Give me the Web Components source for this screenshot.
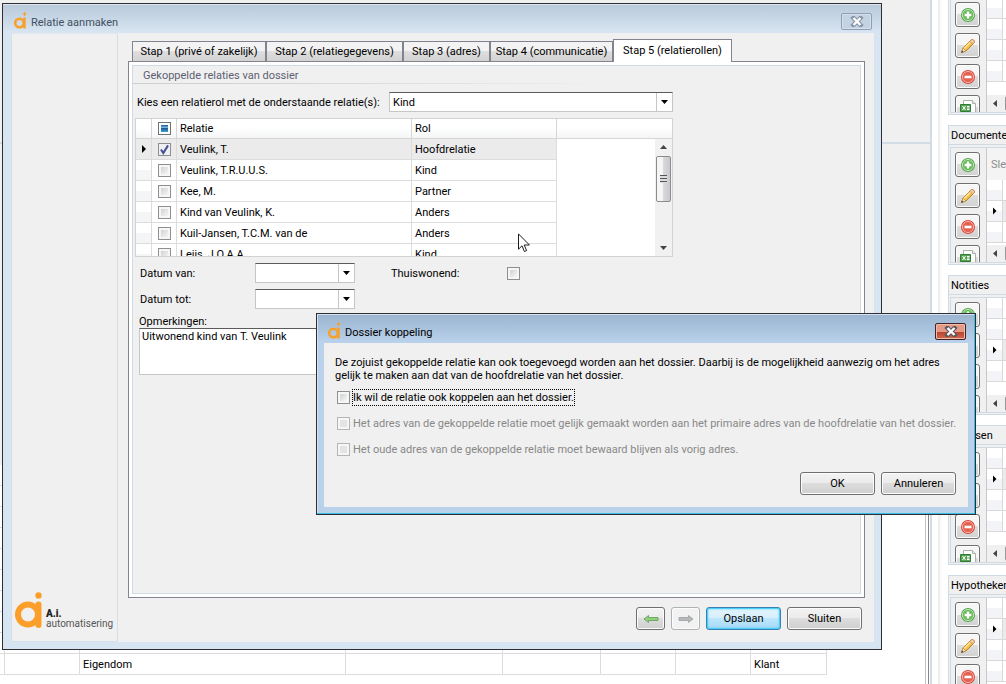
<!DOCTYPE html>
<html lang="nl">
<head>
<meta charset="utf-8">
<title>Relatie aanmaken</title>
<style>
html, body { height: 100%; margin: 0; overflow: hidden; }
body { background: #fff; color: #000; font: 11px/13px Roboto, "Open Sans", sans-serif; }
</style>
</head>
<body>
<app-desktop>
  <case-background slot="main"></case-background>
  <side-panel slot="side" rows="4" marker="0"></side-panel>
  <side-panel slot="side" rows="3" marker="2" hint="Sleep een kolom">Documenten</side-panel>
  <side-panel slot="side" rows="4" marker="3">Notities</side-panel>
  <side-panel slot="side" rows="4" marker="2">Polissen</side-panel>
  <side-panel slot="side" rows="4" marker="2">Hypotheken</side-panel>

  <win-frame slot="wizard" heading="Relatie aanmaken">
    <wizard-body>
      <tab-item slot="tabs" style="--tab-width:134px">Stap 1 (privé of zakelijk)</tab-item>
      <tab-item slot="tabs" style="--tab-width:137px">Stap 2 (relatiegegevens)</tab-item>
      <tab-item slot="tabs" style="--tab-width:87px">Stap 3 (adres)</tab-item>
      <tab-item slot="tabs" style="--tab-width:123px">Stap 4 (communicatie)</tab-item>
      <tab-item slot="tabs" selected style="--tab-width:119px">Stap 5 (relatierollen)</tab-item>
      <role-form></role-form>
      <push-button slot="actions" icon="back" label="Vorige"></push-button>
      <push-button slot="actions" icon="next" label="Volgende" disabled></push-button>
      <push-button slot="actions" primary>Opslaan</push-button>
      <push-button slot="actions">Sluiten</push-button>
    </wizard-body>
  </win-frame>

  <win-frame slot="dialog" heading="Dossier koppeling" active>
    <link-dialog>
      <span slot="message">De zojuist gekoppelde relatie kan ook toegevoegd worden aan het dossier. Daarbij is de mogelijkheid aanwezig om het adres gelijk te maken aan dat van de hoofdrelatie van het dossier.</span>
      <check-field focused>Ik wil de relatie ook koppelen aan het dossier.</check-field>
      <check-field disabled>Het adres van de gekoppelde relatie moet gelijk gemaakt worden aan het primaire adres van de hoofdrelatie van het dossier.</check-field>
      <check-field disabled>Het oude adres van de gekoppelde relatie moet bewaard blijven als vorig adres.</check-field>
      <push-button slot="actions">OK</push-button>
      <push-button slot="actions">Annuleren</push-button>
    </link-dialog>
  </win-frame>

  <mouse-pointer slot="pointer"></mouse-pointer>
</app-desktop>

<script>
const BASE = `:host, *, *::before, *::after { box-sizing: border-box; }
button, input, select, textarea { font: inherit; color: inherit; margin: 0; }`;

const CHECK = `input[type=checkbox] { appearance: none; flex: none; width: 13px; height: 13px; margin: 0; border: 1px solid #8e8f8f;
  background: linear-gradient(135deg, #cfd2d6, #f6f6f6) content-box, #f6f6f6; padding: 2px; display: block; }
input[type=checkbox]:disabled { border-color: #b5b5b5; background: linear-gradient(#e4e4e4, #e4e4e4) content-box, #f6f6f6; }
input[type=checkbox]:checked { background: url("data:image/svg+xml,%3Csvg xmlns='http://www.w3.org/2000/svg' viewBox='0 0 11 11'%3E%3Cpath d='M2.5 5.5 4.5 8.5 8.5 2' fill='none' stroke='%23484f97' stroke-width='1.7'/%3E%3C/svg%3E") border-box, #eef0f4; }
input[type=checkbox].some { border-color: #6f7378; background: linear-gradient(#2b6ca8 0 10%, #7db9e4 35%, #1d5f9c 50%, #3fa0d8) content-box, #fff; }`;

function define(name, markup, setup) {
  customElements.define(name, class extends HTMLElement {
    connectedCallback() {
      if (this.shadowRoot) return;
      const root = this.attachShadow({ mode: 'open' });
      root.innerHTML = typeof markup === 'function' ? markup(this) : markup;
      if (setup) setup(this, root);
    }
  });
}

/* Desktop: the case screen, with the windows lying over it */
define('app-desktop', `<style>${BASE}
:host { display: flex; height: 100%; position: relative; overflow: hidden; }
.main { flex: 1; min-width: 0; display: flex; }
.side { flex: none; width: 74px; padding-left: 16px; overflow: hidden; background: linear-gradient(90deg, #fff 6px, #e9ebed 6px, #fff 10px); }
.stack { display: flex; flex-direction: column; gap: 10px; margin-top: -25px; }
.wizard { position: absolute; left: 2px; top: 3px; right: 124px; bottom: 34px; display: flex; }
.dialog { position: absolute; left: 316px; top: 313px; right: 30px; display: flex; }
.pointer { position: absolute; left: 518px; top: 233px; }
</style>
<div class="main"><slot name="main"></slot></div>
<aside class="side"><div class="stack"><slot name="side"></slot></div></aside>
<div class="wizard"><slot name="wizard"></slot></div>
<div class="pointer"><slot name="pointer"></slot></div>
<div class="dialog"><slot name="dialog"></slot></div>`);

define('case-background', `<style>${BASE}
:host { flex: 1; display: flex; flex-direction: column; min-width: 0; border-right: 2px solid #d2dce6; }
.top { flex: 1; background: #f0f0f0; display: flex; flex-direction: column; }
.top i { flex: none; height: 144px; border-bottom: 2px solid #d2dce6; }
.bottom { flex: none; padding-bottom: 9px; margin-right: 1px; border-right: 1px solid #85858d; background: linear-gradient(#c4c4c8, #c4c4c8) right 2px top / 1px 100% no-repeat #fff; }
table { border-collapse: separate; border-spacing: 0; table-layout: fixed; width: 827px; }
td { height: 21px; padding: 0 3px; border-right: 1px solid #dcdcdc; border-bottom: 1px solid #dcdcdc; white-space: nowrap; }
</style>
<div class="top"><i></i></div>
<div class="bottom"><table aria-label="Dossiers">
<colgroup><col style="width:5px"><col style="width:75px"><col style="width:266px"><col style="width:157px"><col style="width:98px"><col style="width:75px"><col style="width:75px"><col style="width:76px"></colgroup>
<tbody></tbody></table></div>`, (el, root) => {
  const empty = '<tr>' + '<td></td>'.repeat(8) + '</tr>';
  root.querySelector('tbody').innerHTML = empty.repeat(9) +
    '<tr><td></td><td></td><td>Eigendom</td><td></td><td></td><td></td><td></td><td>Klant</td></tr>';
});

/* Icons of the tool buttons */
const ICONS = {
  add: `<circle cx="8" cy="8" r="7" fill="#54a64c"/><circle cx="8" cy="8" r="5.6" fill="#68b95b" stroke="#c9eabf" stroke-width=".9"/><path d="M8 4.6v6.8M4.6 8h6.8" stroke="#fff" stroke-width="2.4"/>`,
  edit: `<path d="M1.5 14.5 3 10 11.2 1.8c1.300-1.300 4.300 1.400 3 3L6 13z" fill="#f6bd3c" stroke="#b87a1e" stroke-width=".9"/><path d="M4 10.600 11 3.600" stroke="#ffe79b" stroke-width="1.500"/><path d="M11.200 1.800c1.300-1.300 4.300 1.400 3 3l-1.500 1.500-3-3z" fill="#f0c9a0" stroke="#b98a5c" stroke-width=".7"/><path d="M1.500 14.500 3 10l3 3z" fill="#f3dfb6" stroke="#b08040" stroke-width=".6"/><path d="M1.200 14.800 2 12.500 3.600 14z" fill="#444"/>`,
  remove: `<circle cx="8" cy="8" r="7" fill="#d8463c"/><circle cx="8" cy="8" r="5.600" fill="#e6604f" stroke="#f7bcb3" stroke-width=".9"/><path d="M4.500 8h7" stroke="#fff" stroke-width="2.600"/>`,
  sheet: `<path d="M3.500.5h9l3 3v12h-12z" fill="#fff" stroke="#a9b2a9"/><path d="M12.500.5v3h3" fill="#e9eee9" stroke="#a9b2a9"/><path d="M.5 4.500h10v7H.5z" fill="#58a255" stroke="#2f7d33"/><path d="m2.500 6 3 4m0-4-3 4M7 6.500h2.500M7 8h2.500M7 9.500h2.500" stroke="#fff" stroke-width="1"/>`,
  back: `<path d="M1 8 5.500 4.500V6.500H15v3H5.500v2z" fill="#8ed07c" stroke="#5f9a57" stroke-width=".8"/>`,
  next: `<path d="M15 8 10.500 4.500V6.500H1v3h9.500v2z" fill="#b4b8ba" stroke="#9a9ea0" stroke-width=".8"/>`
};
const icon = n => `<svg width="16" height="16" viewBox="0 0 16 16" aria-hidden="true">${ICONS[n]}</svg>`;

/* Docked panel with tool buttons and a small grid */
define('side-panel', el => `<style>${BASE}
:host { display: flex; flex-direction: column; gap: 2px; flex: none; height: 140px; width: 240px; background: #f0f0f0; border: 1px solid #cfdae4; }
h2 { flex: none; margin: 0; height: 19px; padding: 3px 2px; font: inherit; border-bottom: 1px solid #cfdae4; }
.body { flex: 1; min-height: 0; margin: 0 1px 1px; border: 1px solid #cfdae4; display: flex; overflow: hidden; }
.tools { flex: none; width: 35px; padding: 4px; display: flex; flex-direction: column; gap: 6px; }
button { flex: none; width: 25px; height: 25px; padding: 0; display: grid; place-items: center; border: 1px solid #707070; border-radius: 3px; background: linear-gradient(#f6f6f6 50%, #dedede 50%, #d2d2d2); box-shadow: inset 0 0 0 1px #fcfcfc; }
.grid { flex: 1; display: flex; flex-direction: column; overflow: hidden; border-left: 1px solid #c8c8c8; background: #fff; }
.hint { flex: none; height: 32px; padding: 10px 4px; background: #f4f4f4; color: #8c8c8c; }
.row { flex: none; height: 21px; display: flex; border-bottom: 1px solid #d9d9d9; }
.row i { width: 16px; border-right: 1px solid #d9d9d9; background: linear-gradient(#fff 50%, #f3f4f7 50%); display: grid; place-items: center; }
.row.on { background: #ebebeb; }
.mark { width: 4px; height: 8px; background: #000; clip-path: polygon(0 0, 100% 50%, 0 100%); }
.scroll { margin-top: auto; flex: none; height: 17px; background: #f0f0f0; display: flex; align-items: center; gap: 8px; padding-left: 6px; }
.scroll b { width: 4px; height: 7px; background: #444; clip-path: polygon(100% 0, 0 50%, 100% 100%); }
.scroll u { flex: 1; height: 15px; border: 1px solid #979797; border-radius: 2px; background: linear-gradient(#f4f4f4, #d5d5d5); }
</style>
<h2><slot></slot></h2>
<div class="body">
<div class="tools"><button aria-label="Toevoegen">${icon('add')}</button><button aria-label="Wijzigen">${icon('edit')}</button><button aria-label="Verwijderen">${icon('remove')}</button><button aria-label="Exporteren">${icon('sheet')}</button></div>
<div class="grid">${el.hasAttribute('hint') ? `<div class="hint">${el.getAttribute('hint')}</div>` : ''}${
  Array.from({ length: +el.getAttribute('rows') }, (_, i) => i + 1 === +el.getAttribute('marker')
    ? '<div class="row on"><i><span class="mark"></span></i></div>' : '<div class="row"><i></i></div>').join('')
}<div class="scroll"><b></b><u></u></div></div>
</div>`);

/* Window frame with title bar */
define('win-frame', el => `<style>${BASE}
:host { flex: 1; min-width: 0; display: flex; flex-direction: column; border: 1px solid #2e2e34; padding: 0 7px 7px; 
  background: linear-gradient(#b8c9d9, #d7e4f1 28px); box-shadow: inset 0 1px #dfe8f1; }
:host(:not([active])) { padding-left: 8px; }
:host([active]) { background: linear-gradient(#9ab4cf, #b9d1ea 28px); box-shadow: inset -1px -1px #35bfe0, inset 1px 1px #d5e4f3; }
header { flex: none; height: 29px; display: flex; align-items: center; gap: 3px; padding-left: 2px; color: #42505f; }
:host([active]) header { color: #000; padding-left: 3px; }
h1 { flex: 1; margin: 0; padding-top: 7px; font: inherit; }
header svg.logo { flex: none; margin-top: 4px; }
.close { flex: none; width: 31px; height: 17px; padding: 0; margin-top: 6px; margin-right: 2px; display: grid; place-items: center; border: 1px solid #8f9fb1; border-radius: 2px; background: #c4d3e1; box-shadow: inset 0 0 0 1px #d5e0ea; }
:host([active]) .close { border-color: #45222a; background: linear-gradient(#e39a87 50%, #b8402c 50%, #d06a50); box-shadow: inset 0 0 0 1px #f0bda4; }
main { flex: 1; min-height: 0; display: flex; background: #f0f0f0; }
</style>
<header><svg class="logo" width="15" height="17" viewBox="0 0 15 17" aria-hidden="true"><circle cx="6.500" cy="11" r="4.300" fill="none" stroke="#f9a02b" stroke-width="2.600"/><path d="M11.500 5.500v11" stroke="#f9a02b" stroke-width="2.400"/><path d="M11.500 0v4M9.500 2h4" stroke="#f9a02b" stroke-width="1.200"/></svg>
<h1>${el.getAttribute('heading')}</h1>
<button class="close" aria-label="Venster sluiten"><svg width="14" height="11" viewBox="0 0 14 11"><path d="m3.500 2 7 7m0-7-7 7" stroke="${el.hasAttribute('active') ? '#55585e' : '#8493a3'}" stroke-width="4.400" stroke-linecap="square"/><path d="m3.500 2 7 7m0-7-7 7" stroke="#fff" stroke-width="2.400"/></svg></button></header>
<main><slot></slot></main>`);

define('tab-item', `<style>${BASE}
:host { flex: none; width: var(--tab-width); height: 20px; display: block; }
button { width: 100%; height: 100%; padding: 0; white-space: nowrap; border: 1px solid #83838f; border-bottom: 0; background: linear-gradient(#f3f3f3 45%, #dedede 50%, #d2d2d2); }
:host([selected]) { height: 23px; position: relative; margin-bottom: -1px; }
:host([selected]) button { background: #fff; padding-bottom: 1px; }
</style><button role="tab"><slot></slot></button>`);

define('push-button', el => `<style>${BASE}
:host { flex: none; display: block; width: ${el.hasAttribute('icon') ? 29 : 75}px; }
button { width: 100%; height: 23px; padding: 0; display: grid; place-items: center; border: 1px solid #707070; border-radius: 3px; background: linear-gradient(#f3f3f3, #ebebeb 48%, #dddddd 50%, #cfcfcf); box-shadow: inset 0 0 0 1px #fcfcfc; }
:host([disabled]) button { border-color: #adb2b5; background: #f2f2f2; }
:host([primary]) button { border-color: #3c7fb1; background: linear-gradient(#e3f4fc, #d6effc 48%, #bee6fd 50%, #a7d9f5); box-shadow: inset 0 0 0 1px #48d0fb, inset 0 0 2px 1px #48d0fb; }
</style><button type="button"${el.hasAttribute('disabled') ? ' disabled' : ''}${el.hasAttribute('label') ? ` aria-label="${el.getAttribute('label')}"` : ''}>${
  el.hasAttribute('icon') ? icon(el.getAttribute('icon')) : '<slot></slot>'}</button>`);

define('brand-logo', `<style>${BASE}
:host { display: flex; align-items: flex-end; gap: 4px; }
svg { flex: none; }
p { margin: 0; color: #555; font-size: 10px; line-height: 10px; }
b { display: block; color: #222; font-weight: 900; }
</style><svg width="27" height="37" viewBox="0 0 27 37" aria-hidden="true"><circle cx="13" cy="22.500" r="10" fill="none" stroke="#fb9f2a" stroke-width="6"/><path d="M23.500 12.500v20.500" stroke="#fb9f2a" stroke-width="6" stroke-linecap="round"/><circle cx="23.500" cy="3.500" r="3.200" fill="#fb9f2a"/></svg>
<p><b>A.i.</b>automatisering</p>`);

define('wizard-body', `<style>${BASE}
:host { flex: 1; min-width: 0; display: flex; gap: 10px; padding-right: 9px; }
nav { flex: none; width: 107px; display: flex; flex-direction: column; justify-content: flex-end; padding: 0 0 12px 3px; border: 1px solid #d5dfe9; border-top-color: #e4e8ec; }
section { flex: 1; min-width: 0; display: flex; flex-direction: column; }
.tabs { flex: none; display: flex; align-items: flex-end; padding: 6px 0 0 4px; }
.page { flex: 1; min-height: 0; border: 1px solid #83838f; background: #fff; padding: 3px; display: flex; }
.inner { flex: 1; min-width: 0; border: 1px solid #cfdae4; background: #f0f0f0; }
footer { flex: none; display: flex; justify-content: flex-end; gap: 6px; padding: 9px 3px 12px; }
</style>
<nav><brand-logo></brand-logo></nav>
<section><div class="tabs" role="tablist"><slot name="tabs"></slot></div>
<div class="page"><div class="inner"><slot></slot></div></div>
<footer><slot name="actions"></slot></footer></section>`);

define('check-field', el => `<style>${BASE}${CHECK}
:host { display: block; }
label { display: flex; align-items: center; height: 26px; gap: 2px; }
:host([disabled]) label { color: #888; }
span { padding: 1px 0; border: 1px solid transparent; white-space: nowrap; }
:host([focused]) span { border: 1px dotted #000; }
</style><label><input type="checkbox"${el.hasAttribute('disabled') ? ' disabled' : ''}><span><slot></slot></span></label>`);

define('link-dialog', `<style>${BASE}
:host { flex: 1; min-width: 0; display: flex; flex-direction: column; padding: 13px 12px 12px; }
p { margin: 0 10px 2px -1px; }
.checks { padding-left: 1px; }
footer { display: flex; justify-content: flex-end; gap: 6px; padding-top: 10px; }
</style><p><slot name="message"></slot></p><div class="checks"><slot></slot></div><footer><slot name="actions"></slot></footer>`);

const FIELD = `border: 1px solid #c6c6c6; border-top-color: #5b5b5b; background-color: #fff; border-radius: 0;`;

define('date-field', `<style>${BASE}
:host { display: block; }
label { display: flex; align-items: center; }
span { width: 115px; }
div { display: flex; width: 100px; height: 20px; ${FIELD} }
input { flex: 1; min-width: 0; border: 0; padding: 0 3px; background: #fff; }
button { flex: none; width: 16px; border: 0; border-left: 1px solid #c6c6c6; padding: 0; background: #fff; display: grid; place-items: center; }
i { width: 7px; height: 4px; background: #000; clip-path: polygon(0 0, 100% 0, 50% 100%); }
</style><label><span><slot></slot></span><div><input type="text"><button type="button" aria-label="Kalender"><i></i></button></div></label>`);

define('role-grid', `<style>${BASE}${CHECK}
:host { display: flex; flex-direction: column; height: 139px; border: 1px solid #d2d2d2; background: #fff; position: relative; overflow: hidden; }
table { border-collapse: separate; border-spacing: 0; table-layout: fixed; width: 100%; }
th, td { height: 21px; padding: 0 3px; text-align: left; font-weight: normal; white-space: nowrap; border-right: 1px solid #dcdcdc; border-bottom: 1px solid #dcdcdc; }
th { height: 20px; background: linear-gradient(#fff 45%, #f4f5f7); border-color: #d6d6d6; }
td:first-child { background: linear-gradient(#fff 50%, #f4f5f7 50%); }
th:last-child, td:last-child { border-right: 0; }
td:last-child { border-bottom: 0; background: #fff; }
tr.on td:not(:last-child) { background: #ebebeb; }
th input, td input { margin: 0 auto !important; }
th:nth-child(2), td:nth-child(2) { padding: 0 5px; }
.mark { display: block; margin-left: 3px; width: 4px; height: 8px; background: #000; clip-path: polygon(0 0, 100% 50%, 0 100%); }
.bar { position: absolute; right: 0; top: 20px; bottom: 0; width: 17px; background: #f1f1f1; display: flex; flex-direction: column; align-items: center; padding: 6px 1px; }
.up, .down { width: 7px; height: 4px; background: #444; clip-path: polygon(50% 0, 100% 100%, 0 100%); }
.down { margin-top: auto; clip-path: polygon(0 0, 100% 0, 50% 100%); }
.thumb { width: 15px; height: 46px; margin-top: 7px; border: 1px solid #8c8c8c; border-radius: 2px; background: linear-gradient(90deg, #f5f5f5 45%, #d6d8db 50%, #c8cace); display: grid; place-items: center; }
.thumb i { width: 7px; height: 8px; background: repeating-linear-gradient(#555 0 1px, #ddd 1px 3px); }
</style>
<table><colgroup><col style="width:16px"><col style="width:25px"><col style="width:235px"><col style="width:145px"><col></colgroup>
<thead><tr><th></th><th><input type="checkbox" class="some" aria-label="Alles"></th><th>Relatie</th><th>Rol</th><th></th></tr></thead><tbody></tbody></table>
<div class="bar"><i class="up"></i><div class="thumb"><i></i></div><i class="down"></i></div>`, (el, root) => {
  root.querySelector('tbody').innerHTML = [
    ['Veulink, T.', 'Hoofdrelatie'], ['Veulink, T.R.U.U.S.', 'Kind'], ['Kee, M.', 'Partner'],
    ['Kind van Veulink, K.', 'Anders'], ['Kuil-Jansen, T.C.M. van de', 'Anders'], ['Leijs, J.O.A.A.', 'Kind']
  ].map(([n, r], i) => `<tr${i ? '' : ' class="on"'}><td>${i ? '' : '<span class="mark"></span>'}</td><td><input type="checkbox" aria-label="${n}"${i ? '' : ' checked'}></td><td>${n}</td><td>${r}</td><td></td></tr>`).join('');
});

define('role-form', `<style>${BASE}${CHECK}
:host { display: block; }
h2 { margin: 0; height: 18px; padding: 3px 10px; font: inherit; color: #5c6170; background: linear-gradient(90deg, #cfcfcf, #d4d4d4 20%, transparent 480px) left bottom / 100% 1px no-repeat; }
.form { max-width: 540px; padding: 8px 0 0 2px; }
.pick { display: flex; align-items: center; height: 20px; margin-bottom: 6px; }
.pick label { flex: 1; padding-left: 2px; white-space: nowrap; }
.pick div { width: 284px; height: 20px; display: grid; align-items: center; }
.pick div > * { grid-area: 1 / 1; }
select { appearance: none; width: 100%; height: 20px; padding: 0 3px; ${FIELD} }
.arrow { justify-self: end; width: 16px; height: 18px; margin-right: 1px; border-left: 1px solid #c6c6c6; display: grid; place-items: center; pointer-events: none; }
.arrow i { width: 7px; height: 4px; background: #000; clip-path: polygon(0 0, 100% 0, 50% 100%); }
.dates { display: grid; grid-template-columns: 215px auto 1fr; gap: 6px 36px; padding: 6px 0 0 5px; }
.home { display: flex; align-items: center; }
.home span { width: 116px; }
.note { display: block; padding: 6px 0 0 4px; }
textarea { display: block; width: 100%; height: 47px; padding: 1px 2px; resize: none; line-height: 13px; ${FIELD} }
</style>
<h2>Gekoppelde relaties van dossier</h2>
<div class="form">
<div class="pick"><label for="role">Kies een relatierol met de onderstaande relatie(s):</label><div><select id="role"><option>Kind</option><option>Partner</option><option>Anders</option></select><span class="arrow"><i></i></span></div></div>
<role-grid></role-grid>
<div class="dates"><date-field>Datum van:</date-field><label class="home"><span>Thuiswonend:</span><input type="checkbox"></label><i></i><date-field>Datum tot:</date-field></div>
<label class="note">Opmerkingen:<textarea>Uitwonend kind van T. Veulink</textarea></label>
</div>`);

define('mouse-pointer', `<style>:host { display: block; } svg { display: block; }</style>
<svg width="13" height="20" viewBox="0 0 13 20" aria-hidden="true"><path d="M.5.900v15.300l3.500-3.400 2.400 5.700 2.200-.9L6.200 12h5.200z" fill="#fff" stroke="#1c1c1c"/></svg>`);
</script>
</body>
</html>
